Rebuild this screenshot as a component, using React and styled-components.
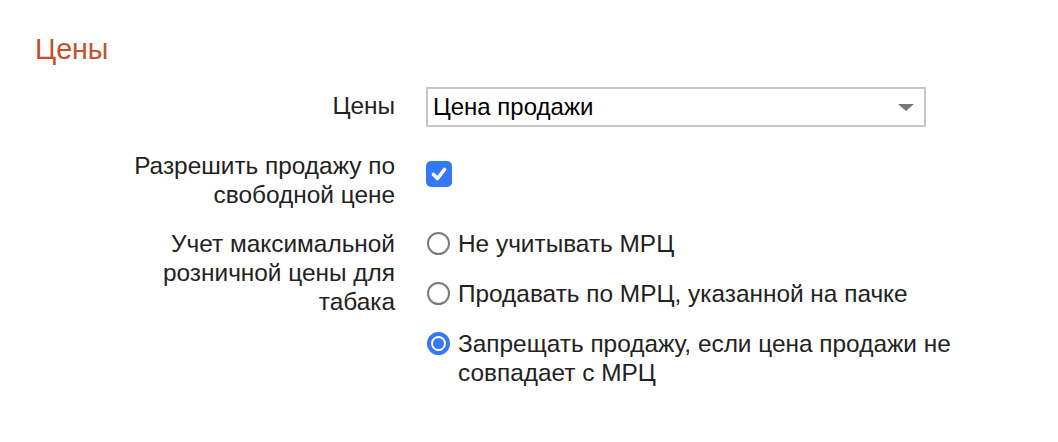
import React from "react";
import styled, { createGlobalStyle } from "styled-components";

const Global = createGlobalStyle`
  html, body { margin: 0; padding: 0; background: #fff; }
  body { font-family: "Liberation Sans", Arial, sans-serif; color: #222; }
`;

const Page = styled.div`
  padding: 30px 0 0 35px;
  width: 1058px;
  box-sizing: border-box;
`;

const Title = styled.h2`
  margin: 0 0 19px 0;
  font-size: 28.6px;
  font-weight: 400;
  color: #c4502b;
  line-height: 38px;
`;

const Form = styled.div`
  display: grid;
  grid-template-columns: 280px 560px;
  column-gap: 31px;
  row-gap: 20px;
  margin-left: 80px;
`;

const Label = styled.div`
  text-align: right;
  font-size: 24.4px;
  line-height: 29px;
  color: #222;
  padding-top: ${(p) => p.$pt || 0}px;
`;

const Control = styled.div`
  display: flex;
  flex-direction: column;
  gap: ${(p) => p.$gap || 0}px;
`;

const Select = styled.div`
  width: 500px;
  height: 40px;
  box-sizing: border-box;
  border: 2px solid #c6c6c6;
  display: flex;
  align-items: center;
  justify-content: space-between;
  padding: 0 10px 0 5px;
  margin-bottom: 4px;
  font-size: 24px;
  color: #000;
`;

const Arrow = styled.span`
  width: 0;
  height: 0;
  border-left: 8px solid transparent;
  border-right: 8px solid transparent;
  border-top: 7px solid #777;
`;

const Checkbox = styled.span`
  width: 26px;
  height: 26px;
  border-radius: 5px;
  background: #3478f6;
  display: inline-flex;
  align-items: center;
  justify-content: center;
  margin-top: 10px;
`;

const Option = styled.div`
  display: flex;
  align-items: flex-start;
  gap: 8px;
  font-size: 24.4px;
  line-height: 29px;
  color: #222;
`;

const Radio = styled.span`
  flex: none;
  width: 23px;
  height: 23px;
  box-sizing: border-box;
  border-radius: 50%;
  margin: 3px 0 0 1px;
  border: ${(p) => (p.$checked ? "4px solid #3478f6" : "2px solid #7a7a7a")};
  background: #fff;
  display: flex;
  align-items: center;
  justify-content: center;
  &::after {
    content: "";
    display: ${(p) => (p.$checked ? "block" : "none")};
    width: 11px;
    height: 11px;
    border-radius: 50%;
    background: #3478f6;
  }
`;

export default function App() {
  return (
    <>
      <Global />
      <Page>
        <Title>Цены</Title>
        <Form>
          <Label $pt={4}>Цены</Label>
          <Control>
            <Select>
              <span>Цена продажи</span>
              <Arrow />
            </Select>
          </Control>
          <Label>Разрешить продажу по свободной цене</Label>
          <Control>
            <Checkbox>
              <svg width="18" height="18" viewBox="0 0 18 18">
                <path d="M3.5 9.5 L7.5 13.5 L14.5 4.5" fill="none" stroke="#fff" strokeWidth="3.6" strokeLinecap="round" strokeLinejoin="round" />
              </svg>
            </Checkbox>
          </Control>
          <Label>Учет максимальной розничной цены для табака</Label>
          <Control $gap={21}>
            <Option><Radio />Не учитывать МРЦ</Option>
            <Option><Radio />Продавать по МРЦ, указанной на пачке</Option>
            <Option><Radio $checked />Запрещать продажу, если цена продажи не совпадает с МРЦ</Option>
          </Control>
        </Form>
      </Page>
    </>
  );
}
